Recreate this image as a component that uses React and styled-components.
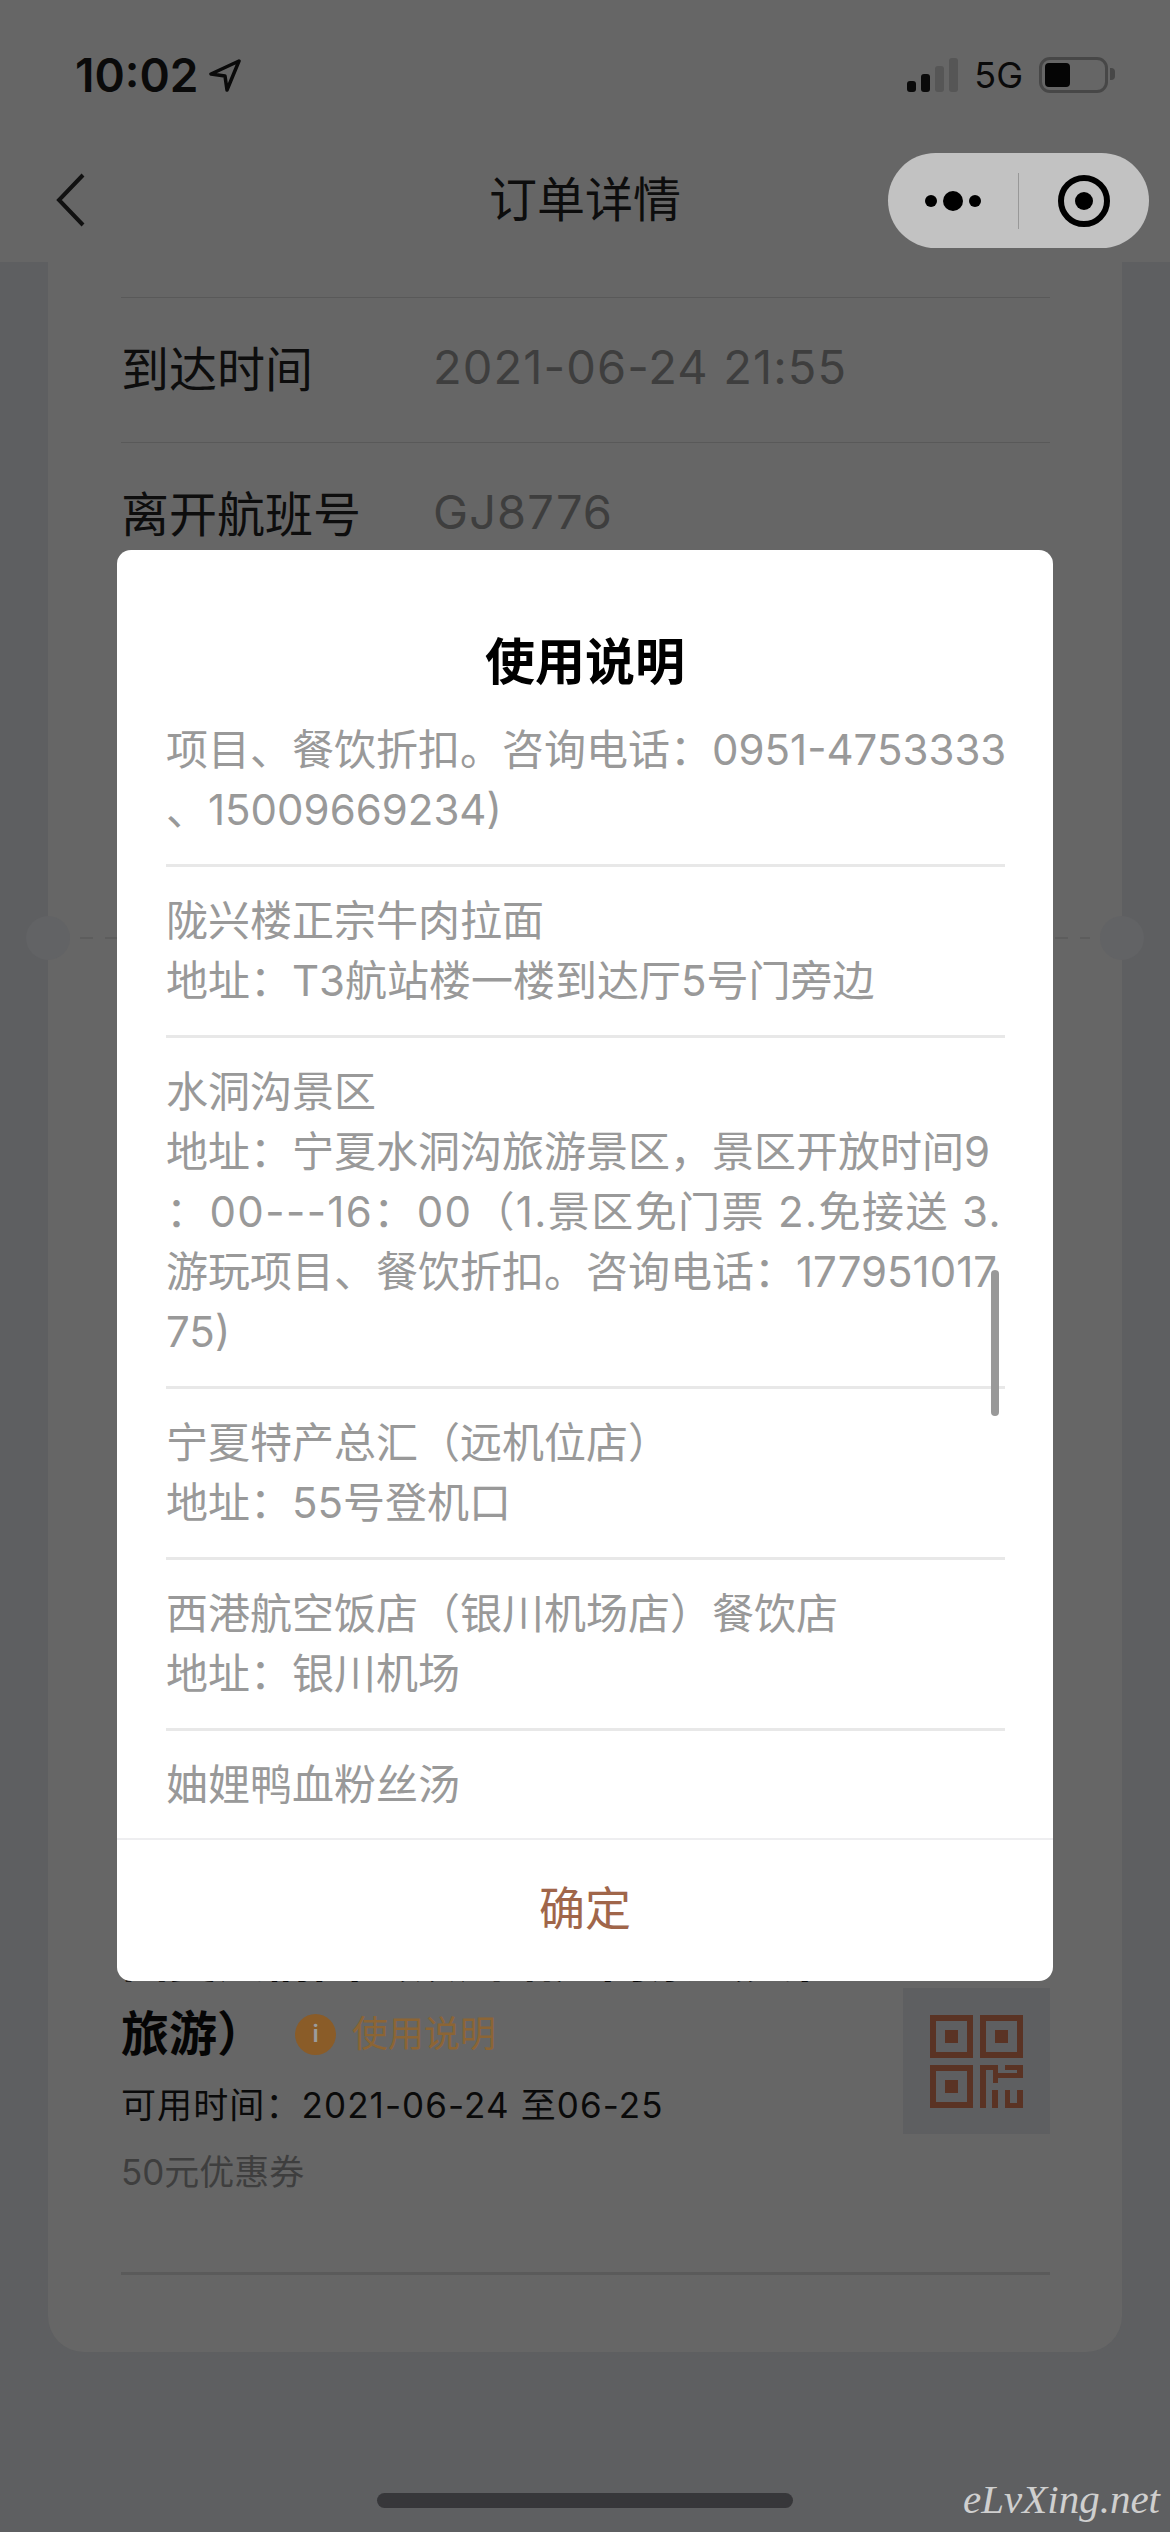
import React from "react";
import styled, { createGlobalStyle } from "styled-components";

const FONT = `Inter, "Noto Sans CJK SC", "Liberation Sans", sans-serif`;

const GlobalStyle = createGlobalStyle`
  html, body {
    margin: 0;
    padding: 0;
    background: #5e5f61;
    font-family: ${FONT};
  }
  * {
    box-sizing: border-box;
  }
`;

const Page = styled.div`
  position: relative;
  width: 1170px;
  height: 2532px;
  overflow: hidden;
  background: #5e5f61;
`;

const Header = styled.div`
  height: 262px;
  background: #666;
`;

const StatusBar = styled.div`
  display: flex;
  align-items: center;
  justify-content: space-between;
  height: 150px;
  padding: 0 62px 0 75px;
`;

const TimeGroup = styled.div`
  display: flex;
  align-items: center;
  gap: 11px;
`;

const Time = styled.span`
  font-size: 46px;
  font-weight: 600;
  line-height: 50px;
  color: #0a0a0a;
`;

const StatusRight = styled.div`
  display: flex;
  align-items: center;
`;

const Signal = styled.div`
  display: flex;
  align-items: flex-end;
  gap: 5px;
  height: 34px;
  margin: 0 16px 0 0;
`;

const SignalBar = styled.i`
  display: block;
  width: 9px;
  height: ${(p) => p.$h}px;
  border-radius: 3px;
  background: ${(p) => (p.$on ? "#0a0a0a" : "#565656")};
`;

const Network = styled.span`
  font-size: 36px;
  line-height: 40px;
  color: #0a0a0a;
  margin-right: 16px;
`;

const Battery = styled.div`
  position: relative;
  width: 69px;
  height: 36px;
  padding: 3px;
  border: 3px solid #474747;
  border-radius: 11px;
  &::after {
    content: "";
    position: absolute;
    right: -10px;
    top: 8px;
    width: 5px;
    height: 12px;
    border-radius: 0 4px 4px 0;
    background: #474747;
  }
`;

const BatteryFill = styled.div`
  width: 25px;
  height: 100%;
  border-radius: 4px;
  background: #050505;
`;

const NavBar = styled.div`
  position: relative;
  display: flex;
  align-items: center;
  justify-content: center;
  height: 100px;
`;

const BackIcon = styled.svg`
  position: absolute;
  left: 54px;
  top: 22px;
  width: 34px;
  height: 56px;
`;

const NavTitle = styled.div`
  font-size: 48px;
  line-height: 70px;
  color: #0d0d0d;
`;

const Capsule = styled.div`
  position: absolute;
  left: 888px;
  top: 3px;
  display: flex;
  align-items: center;
  width: 261px;
  height: 95px;
  border-radius: 48px;
  background: #c2c2c2;
`;

const CapsuleSide = styled.div`
  display: flex;
  align-items: center;
  justify-content: center;
  width: 130px;
  height: 100%;
`;

const CapsuleLine = styled.div`
  width: 1px;
  height: 56px;
  background: #989898;
`;

const Content = styled.div`
  padding: 0 48px;
`;

const Card = styled.div`
  position: relative;
  padding: 35px 0 77px;
  background: #666;
  border-radius: 0 0 36px 36px;
`;

const Row = styled.div`
  display: flex;
  align-items: center;
  height: 145px;
  margin: 0 72px 0 73px;
  padding-bottom: 8px;
  border-top: 1px solid #595959;
`;

const RowLabel = styled.div`
  width: 312px;
  font-size: 48px;
  color: #0d0d0d;
`;

const RowValue = styled.div`
  font-size: 47px;
  letter-spacing: 1.1px;
  color: #3e3e3e;
`;

const Ticket = styled.div`
  position: relative;
  margin-top: 350px;
  height: 2px;
  margin-left: 32px;
  margin-right: 32px;
  background: repeating-linear-gradient(90deg, #5d5d5d 0 13px, transparent 13px 25px);
  &::before,
  &::after {
    content: "";
    position: absolute;
    top: -21px;
    width: 44px;
    height: 44px;
    border-radius: 50%;
    background: #626365;
  }
  &::before {
    left: -54px;
  }
  &::after {
    right: -54px;
  }
`;

const Coupon = styled.div`
  display: flex;
  justify-content: space-between;
  margin: 990px 72px 0 73px;
`;

const CouponInfo = styled.div`
  width: 760px;
`;

const CouponName = styled.div`
  display: ${(p) => (p.$tail ? "flex" : "block")};
  align-items: center;
  height: 70px;
  font-size: 48px;
  font-weight: 700;
  line-height: ${(p) => (p.$tail ? "70px" : "62px")};
  color: #050505;
  white-space: nowrap;
`;

const InfoIcon = styled.span`
  display: flex;
  align-items: center;
  justify-content: center;
  width: 41px;
  height: 41px;
  margin-left: 30px;
  border-radius: 50%;
  background: #8a5c28;
  font-size: 24px;
  font-weight: 600;
  color: #9c9c9c;
`;

const InfoLink = styled.span`
  margin-left: 16px;
  font-size: 36px;
  font-weight: 400;
  color: #8c6535;
`;

const CouponTime = styled.div`
  margin-top: 11px;
  font-size: 35px;
  letter-spacing: 1.1px;
  line-height: 50px;
  color: #0a0a0a;
  white-space: nowrap;
`;

const CouponNote = styled.div`
  margin-top: 17px;
  font-size: 35px;
  line-height: 50px;
  color: #3e3e3e;
`;

const QrBox = styled.div`
  display: flex;
  align-items: center;
  justify-content: center;
  width: 147px;
  height: 146px;
  margin-top: 59px;
  background: #5e5f61;
`;

const CardLine = styled.div`
  height: 3px;
  margin: 75px 72px 0 73px;
  background: #5a5a5a;
`;

const Modal = styled.div`
  position: absolute;
  left: 117px;
  top: 550px;
  display: flex;
  flex-direction: column;
  width: 936px;
  height: 1431px;
  border-radius: 14px;
  background: #fff;
  overflow: hidden;
`;

const ModalTitle = styled.div`
  flex: none;
  padding: 77px 0 23px;
  font-size: 50px;
  font-weight: 700;
  line-height: 70px;
  text-align: center;
  color: #000;
`;

const ModalBody = styled.div`
  flex: 1;
  min-height: 0;
  padding: 0 48px 0 49px;
  overflow: hidden;
`;

const Item = styled.div`
  padding: ${(p) => (p.$first ? "0 0 24px" : "24px 0")};
  border-bottom: ${(p) => (p.$last ? "none" : "3px solid #e8e8e8")};
`;

const ItemLine = styled.div`
  font-size: 42px;
  letter-spacing: ${(p) => (p.$wide ? "1.4px" : "0")};
  line-height: 60px;
  color: #999;
  white-space: nowrap;
`;

const ScrollThumb = styled.div`
  position: absolute;
  left: 874px;
  top: 720px;
  width: 8px;
  height: 146px;
  border-radius: 4px;
  background: #999;
`;

const ModalFooter = styled.div`
  flex: none;
  display: flex;
  align-items: center;
  justify-content: center;
  height: 143px;
  padding-bottom: 12px;
  border-top: 2px solid #eeeef0;
  font-size: 46px;
  color: #a0664a;
`;

const HomeBar = styled.div`
  position: absolute;
  left: 377px;
  top: 2493px;
  width: 416px;
  height: 15px;
  border-radius: 8px;
  background: #37373a;
`;

const Watermark = styled.div`
  position: absolute;
  right: 10px;
  top: 2474px;
  font-family: "Liberation Serif", serif;
  font-size: 41px;
  font-style: italic;
  line-height: 50px;
  color: #cfcfcf;
`;

// full-width punctuation, kept as escapes so it can't get swapped for ascii
const COLON = "\uFF1A";
const LP = "\uFF08";
const RP = "\uFF09";
const COMMA = "\uFF0C";

const TIMES_LINE = `${COLON}00---16${COLON}00${LP}1.景区免门票 2.免接送 3.`;

const items = [
  [`项目、餐饮折扣。咨询电话${COLON}0951-4753333`, "、15009669234)"],
  ["陇兴楼正宗牛肉拉面", `地址${COLON}T3航站楼一楼到达厅5号门旁边`],
  [
    "水洞沟景区",
    `地址${COLON}宁夏水洞沟旅游景区${COMMA}景区开放时间9`,
    TIMES_LINE,
    `游玩项目、餐饮折扣。咨询电话${COLON}177951017`,
    "75)",
  ],
  [`宁夏特产总汇${LP}远机位店${RP}`, `地址${COLON}55号登机口`],
  [`西港航空饭店${LP}银川机场店${RP}餐饮店`, `地址${COLON}银川机场`],
  ["妯娌鸭血粉丝汤"],
];

const signalBars = [
  { h: 11, on: true },
  { h: 18, on: true },
  { h: 26, on: false },
  { h: 34, on: false },
];

const QrIcon = () => (
  <svg width="93" height="93" viewBox="0 0 93 93" fill="#5a3324">
    <path
      fillRule="evenodd"
      d="M0 0h43v43H0zM6 6v31h31V6zM15 15h13v13H15zM50 0h43v43H50zM56 6v31h31V6zM65 15h13v13H65zM0 50h43v43H0zM6 56v31h31V56zM15 65h13v13H15z"
    />
    <path d="M50 50h18v18h-5V55h-7v38h-6zM75 50h18v13H63v-5h24v-3H75zM62 75h6v18h-6zM75 75h5v13h7V75h6v18H75z" />
  </svg>
);

const App = () => (
  <Page>
    <GlobalStyle />
    <Header>
      <StatusBar>
        <TimeGroup>
          <Time>10:02</Time>
          <svg width="32" height="34" viewBox="0 0 32 34" fill="none" stroke="#0a0a0a" strokeWidth="3.5" strokeLinejoin="round">
            <path d="M30 3 2 16l14 2 2 14z" />
          </svg>
        </TimeGroup>
        <StatusRight>
          <Signal>
            {signalBars.map((bar) => (
              <SignalBar key={bar.h} $h={bar.h} $on={bar.on} />
            ))}
          </Signal>
          <Network>5G</Network>
          <Battery>
            <BatteryFill />
          </Battery>
        </StatusRight>
      </StatusBar>
      <NavBar>
        <BackIcon viewBox="0 0 34 56" fill="none" stroke="#111" strokeWidth="4">
          <path d="M29 3 5 28l24 25" />
        </BackIcon>
        <NavTitle>订单详情</NavTitle>
        <Capsule>
          <CapsuleSide>
            <svg width="60" height="24" viewBox="0 0 60 24" fill="#000">
              <circle cx="8" cy="12" r="6" />
              <circle cx="30" cy="12" r="10" />
              <circle cx="52" cy="12" r="6" />
            </svg>
          </CapsuleSide>
          <CapsuleLine />
          <CapsuleSide>
            <svg width="56" height="56" viewBox="0 0 56 56">
              <circle cx="28" cy="28" r="23" fill="none" stroke="#000" strokeWidth="6" />
              <circle cx="28" cy="28" r="9" fill="#000" />
            </svg>
          </CapsuleSide>
        </Capsule>
      </NavBar>
    </Header>
    <Content>
      <Card>
        <Row>
          <RowLabel>到达时间</RowLabel>
          <RowValue>2021-06-24 21:55</RowValue>
        </Row>
        <Row>
          <RowLabel>离开航班号</RowLabel>
          <RowValue>GJ8776</RowValue>
        </Row>
        <Ticket />
        <Coupon>
          <CouponInfo>
            <CouponName>{`西夏风情园${LP}银川站${RP}门票${LP}文化`}</CouponName>
            <CouponName $tail>
              {`旅游${RP}`}
              <InfoIcon>i</InfoIcon>
              <InfoLink>使用说明</InfoLink>
            </CouponName>
            <CouponTime>{`可用时间${COLON}2021-06-24 至06-25`}</CouponTime>
            <CouponNote>50元优惠券</CouponNote>
          </CouponInfo>
          <QrBox>
            <QrIcon />
          </QrBox>
        </Coupon>
        <CardLine />
      </Card>
    </Content>
    <Modal>
      <ModalTitle>使用说明</ModalTitle>
      <ModalBody>
        {items.map((lines, i) => (
          <Item key={lines[0]} $first={i === 0} $last={i === items.length - 1}>
            {lines.map((line) => (
              <ItemLine key={line} $wide={line === TIMES_LINE}>
                {line}
              </ItemLine>
            ))}
          </Item>
        ))}
      </ModalBody>
      <ScrollThumb />
      <ModalFooter>确定</ModalFooter>
    </Modal>
    <HomeBar />
    <Watermark>eLvXing.net</Watermark>
  </Page>
);

export default App;
